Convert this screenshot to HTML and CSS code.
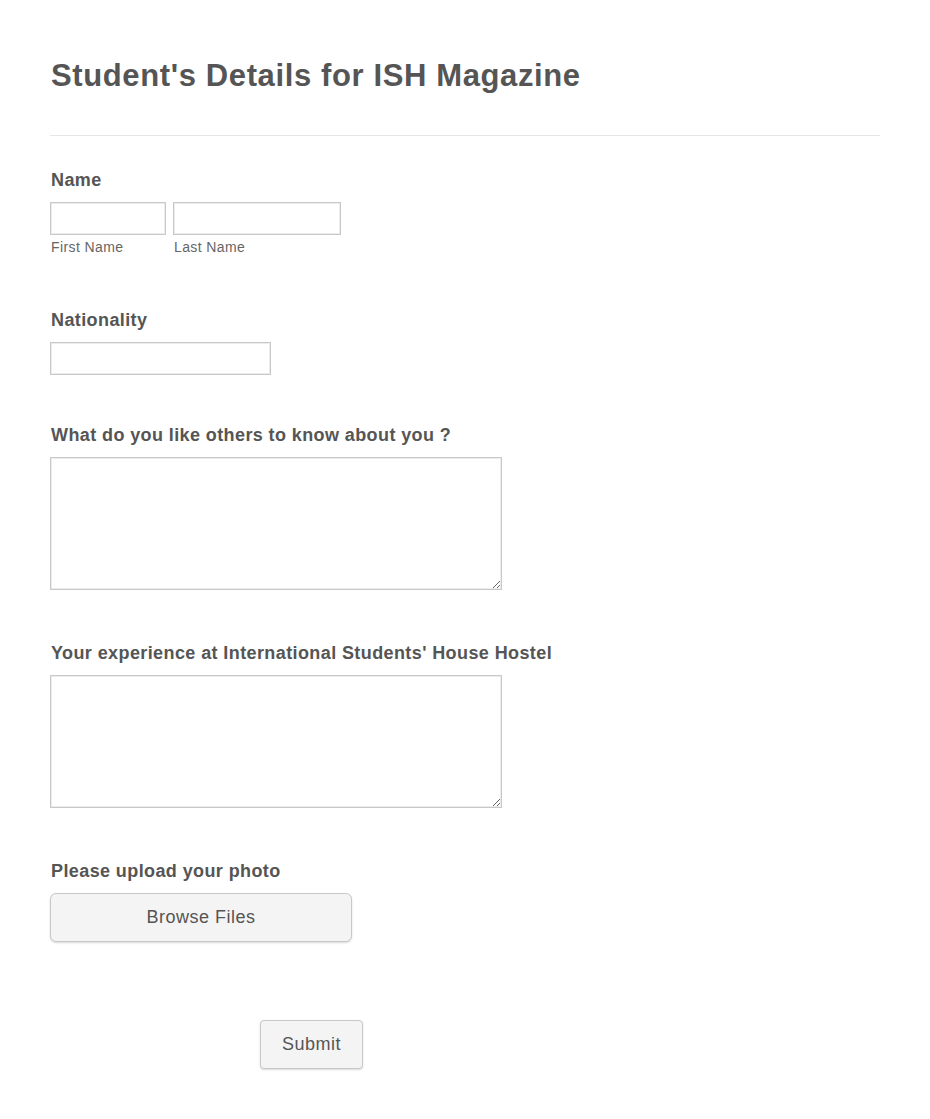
FILE: index.html
```html
<!DOCTYPE html>
<html>
<head>
<meta charset="utf-8">
<link rel="stylesheet" href="styles.css">
</head>
<body>
<form class="form">
  <h1 class="title">Student's Details for ISH Magazine</h1>
  <hr class="divider">
  <div class="field field-name">
    <label class="label">Name</label>
    <div class="name-row">
      <div class="sub">
        <input class="input input-first" type="text">
        <span class="sublabel">First Name</span>
      </div>
      <div class="sub">
        <input class="input input-last" type="text">
        <span class="sublabel">Last Name</span>
      </div>
    </div>
  </div>
  <div class="field field-nat">
    <label class="label">Nationality</label>
    <input class="input input-nat" type="text">
  </div>
  <div class="field field-about">
    <label class="label">What do you like others to know about you ?</label>
    <textarea class="area"></textarea>
  </div>
  <div class="field field-exp">
    <label class="label">Your experience at International Students' House Hostel</label>
    <textarea class="area"></textarea>
  </div>
  <div class="field field-upload">
    <label class="label">Please upload your photo</label>
    <button type="button" class="btn btn-browse">Browse Files</button>
  </div>
  <div class="submit-row">
    <button type="button" class="btn btn-submit">Submit</button>
  </div>
</form>
</body>
</html>
```
FILE: styles.css
```css
html, body {
  margin: 0;
  padding: 0;
  background: #fff;
}
body {
  font-family: "Liberation Sans", Arial, sans-serif;
  color: #555;
}
.form {
  padding: 0 50px 0 50px;
  display: flex;
  flex-direction: column;
}
.title {
  font-size: 31px;
  letter-spacing: 0.62px;
  font-weight: bold;
  margin: 58px 0 0 1px;
  line-height: 36px;
  color: #555;
}
.divider {
  border: none;
  border-top: 1px solid #e6e6e6;
  margin: 41px 0 0 0;
  height: 0;
}
.field {
  display: flex;
  flex-direction: column;
  align-items: flex-start;
}
.label {
  font-size: 18px;
  letter-spacing: 0.4px;
  font-weight: bold;
  line-height: 22px;
  color: #555;
  margin-left: 1px;
  margin-bottom: 11px;
}
.field-name { margin-top: 33px; }
.field-nat { margin-top: 54px; }
.field-about { margin-top: 49px; }
.field-exp { margin-top: 52px; }
.field-upload { margin-top: 52px; }
.name-row {
  display: flex;
  gap: 7px;
}
.sub {
  display: flex;
  flex-direction: column;
}
.input, .area {
  box-sizing: border-box;
  border: 1px solid #c8c8c8;
  box-shadow: inset 0 0 0 1px #ececec;
  background: #fff;
  margin: 0;
  outline: none;
  font-family: inherit;
}
.input { height: 33px; }
.input-first { width: 116px; }
.input-last { width: 168px; }
.input-nat { width: 221px; }
.sublabel {
  font-size: 14px;
  letter-spacing: 0.4px;
  line-height: 16px;
  color: #666;
  margin-top: 4px;
  margin-left: 1px;
}
.area {
  width: 452px;
  height: 133px;
  resize: both;
  display: block;
}
.btn {
  font-family: inherit;
  font-size: 18px;
  letter-spacing: 0.5px;
  color: #555;
  background: #f4f4f4;
  border: 1px solid #c8c8c8;
  border-radius: 6px;
  box-shadow: 0 1px 2px rgba(0,0,0,0.15);
  cursor: pointer;
}
.btn-browse {
  width: 302px;
  height: 49px;
}
.submit-row {
  display: flex;
  padding-left: 210px;
  margin-top: 78px;
  margin-bottom: 50px;
}
.btn-submit {
  width: 103px;
  height: 49px;
  border-radius: 4px;
}
```
